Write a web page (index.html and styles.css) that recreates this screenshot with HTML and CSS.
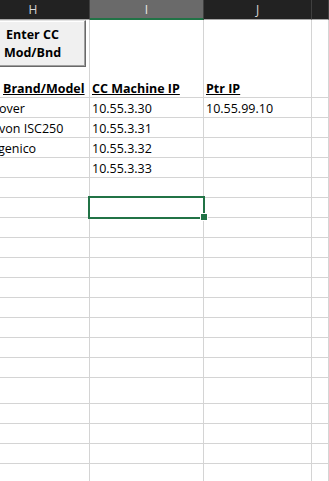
FILE: index.html
```html
<!DOCTYPE html>
<html lang="en">
<head>
    <meta charset="UTF-8">
    <meta name="viewport" content="width=device-width, initial-scale=1.0">
    <title>Card Machines - Sheet</title>
    <link rel="stylesheet" href="styles.css">
</head>
<body>
    <div class="sheet">
        <!-- Column letters -->
        <div class="col-heads">
            <div class="ch ch-h">H</div>
            <div class="ch active">I</div>
            <div class="ch">J</div>
            <div class="ch"></div>
        </div>

        <div class="grid">
            <button class="macro-btn" type="button">Enter CC<br>Mod/Bnd</button>

            <div class="row row-tall">
                <div class="cell hdr">Brand/Model</div>
                <div class="cell hdr">CC Machine IP</div>
                <div class="cell hdr">Ptr IP</div>
                <div class="cell"></div>
            </div>
            <div class="row">
                <div class="cell cut">over</div>
                <div class="cell">10.55.3.30</div>
                <div class="cell">10.55.99.10</div>
                <div class="cell"></div>
            </div>
            <div class="row">
                <div class="cell cut">von ISC250</div>
                <div class="cell">10.55.3.31</div>
                <div class="cell"></div>
                <div class="cell"></div>
            </div>
            <div class="row">
                <div class="cell cut cut-more">genico</div>
                <div class="cell">10.55.3.32</div>
                <div class="cell"></div>
                <div class="cell"></div>
            </div>
            <div class="row">
                <div class="cell"></div>
                <div class="cell">10.55.3.33</div>
                <div class="cell"></div>
                <div class="cell"></div>
            </div>
            <div class="row"><div class="cell"></div><div class="cell"></div><div class="cell"></div><div class="cell"></div></div>
            <div class="row">
                <div class="cell"></div>
                <div class="cell selected"></div>
                <div class="cell"></div>
                <div class="cell"></div>
            </div>
            <div class="row"><div class="cell"></div><div class="cell"></div><div class="cell"></div><div class="cell"></div></div>
            <div class="row"><div class="cell"></div><div class="cell"></div><div class="cell"></div><div class="cell"></div></div>
            <div class="row"><div class="cell"></div><div class="cell"></div><div class="cell"></div><div class="cell"></div></div>
            <div class="row"><div class="cell"></div><div class="cell"></div><div class="cell"></div><div class="cell"></div></div>
            <div class="row"><div class="cell"></div><div class="cell"></div><div class="cell"></div><div class="cell"></div></div>
            <div class="row"><div class="cell"></div><div class="cell"></div><div class="cell"></div><div class="cell"></div></div>
            <div class="row"><div class="cell"></div><div class="cell"></div><div class="cell"></div><div class="cell"></div></div>
            <div class="row"><div class="cell"></div><div class="cell"></div><div class="cell"></div><div class="cell"></div></div>
            <div class="row row-wide"><div class="cell"></div><div class="cell"></div><div class="cell"></div><div class="cell"></div></div>
            <div class="row"><div class="cell"></div><div class="cell"></div><div class="cell"></div><div class="cell"></div></div>
            <div class="row"><div class="cell"></div><div class="cell"></div><div class="cell"></div><div class="cell"></div></div>
            <div class="row"><div class="cell"></div><div class="cell"></div><div class="cell"></div><div class="cell"></div></div>
            <div class="row"><div class="cell"></div><div class="cell"></div><div class="cell"></div><div class="cell"></div></div>
        </div>
    </div>
</body>
</html>
```

FILE: styles.css
```css
/* Global Styles */
* {
    margin: 0;
    padding: 0;
    box-sizing: border-box;
}

body {
    font-family: 'Open Sans', 'Liberation Sans', sans-serif;
    background-color: #fff;
    color: #000;
    overflow: hidden;
}

.sheet {
    width: 329px;
    height: 481px;
    overflow: hidden;
}

/* Column letters */
.col-heads {
    display: grid;
    grid-template-columns: 90px 114px 108px 1fr;
    height: 20px;
}

.ch {
    background-color: #222;
    color: #d6d6d6;
    font-size: 12px;
    line-height: 19px;
    text-align: center;
    border-right: 1px solid #404040;
    border-bottom: 1px solid #a8a8a8;
}

.ch-h {
    padding-right: 23px;
}

.ch.active {
    background-color: #6a6a6a;
    color: #e8e8e8;
    border-bottom-color: #217346;
    box-shadow: inset 0 -1px 0 #217346;
}

/* Cells */
.grid {
    position: relative;
}

.row {
    display: grid;
    grid-template-columns: 90px 114px 108px 1fr;
    height: 20px;
    border-bottom: 1px solid #d4d4d4;
}

.row-tall {
    height: 78px;
}

.row-wide {
    height: 26px;
}

.cell {
    display: flex;
    align-items: flex-end;
    padding: 0 2px 1px 2px;
    border-right: 1px solid #d4d4d4;
    font-size: 12.5px;
    line-height: 15px;
    white-space: nowrap;
}

.cell.hdr {
    font-weight: bold;
    text-decoration: underline;
}

.row-tall .cell.hdr:first-child {
    padding-left: 3px;
}

.cell.cut {
    padding-left: 0;
    margin-left: -1px;
}

.cell.cut-more {
    margin-left: -2px;
}

.cell.selected {
    position: relative;
}

.cell.selected::before {
    content: '';
    position: absolute;
    top: -2px;
    left: -2px;
    right: -2px;
    bottom: -2px;
    border: 2px solid #217346;
    z-index: 2;
}

.cell.selected::after {
    content: '';
    position: absolute;
    right: -4px;
    bottom: -3px;
    width: 6px;
    height: 6px;
    background-color: #217346;
    box-shadow: 0 0 0 1px #fff;
    z-index: 3;
}

/* Form control button drawn over the sheet */
.macro-btn {
    position: absolute;
    left: -21px;
    top: 0;
    width: 107px;
    height: 47px;
    background-color: #f0f0f0;
    border: 1px solid;
    border-color: #e3e3e3 #696969 #696969 #e3e3e3;
    box-shadow: inset -1px -1px 0 #a0a0a0, inset 1px 1px 0 #fff;
    font-family: 'Open Sans', 'Liberation Sans', sans-serif;
    font-size: 12.5px;
    font-weight: bold;
    line-height: 18px;
    color: #000;
    z-index: 4;
}
```
